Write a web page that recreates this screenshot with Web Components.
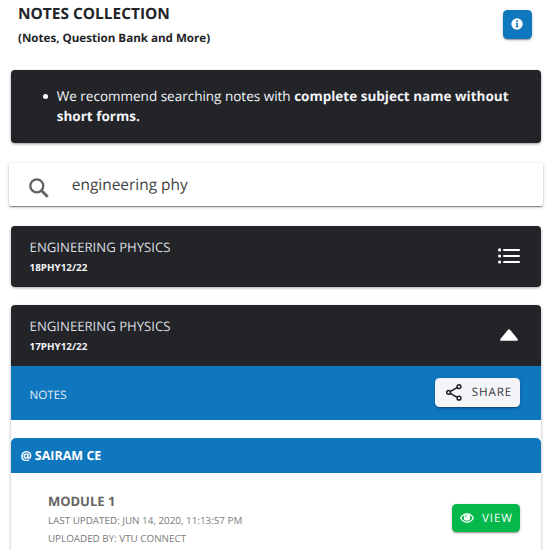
<!DOCTYPE html>
<html lang="en">
<head>
<meta charset="utf-8">
<title>Notes Collection</title>
<style>
html, body { margin: 0; height: 550px; overflow: hidden; background: #fff; }
</style>
</head>
<body>
<notes-page></notes-page>
<script>
const icons = {
  info: '<svg viewBox="0 0 12 12" width="12" height="12"><circle cx="6" cy="6" r="5.7" fill="#fff"/><g fill="#0f77be"><circle cx="6" cy="3.3" r="1"/><path d="M4.6 4.9h2.2v3.3h.8v1H4.5v-1h.8V5.8h-.7z"/></g></svg>',
  search: '<svg viewBox="0 0 20 20" width="20" height="20" fill="none" stroke="#626262"><circle cx="7.8" cy="7.8" r="6.5" stroke-width="2.3"/><path d="M12.4 12.4l6.3 6.3" stroke-width="2.8"/></svg>',
  list: '<svg viewBox="0 0 22 16" width="22" height="16" fill="#fff"><circle cx="1.6" cy="1.9" r="1.6"/><circle cx="1.6" cy="8" r="1.6"/><circle cx="1.6" cy="14" r="1.6"/><rect x="5" y=".9" width="17" height="2" rx="1"/><rect x="5" y="7" width="17" height="2" rx="1"/><rect x="5" y="13" width="17" height="2" rx="1"/></svg>',
  up: '<svg viewBox="0 0 18 12" width="18" height="12" fill="#fff"><path d="M1.2 11.8h15.6c1 0 1.4-1.1.8-1.9L10.2.9Q9 -.4 7.8.9L.4 9.9c-.6.8-.2 1.9.8 1.9z"/></svg>',
  share: '<svg viewBox="0 0 16 17" width="16" height="17" fill="none" stroke="#1d1e20" stroke-width="1.5"><path d="M4.4 7.4l6.7-3.8M4.4 9.4l6.7 4"/><circle cx="2.6" cy="8.4" r="1.9"/><circle cx="13" cy="2.7" r="1.9"/><circle cx="13" cy="14.2" r="1.9"/></svg>',
  eye: '<svg viewBox="0 0 14 10" width="14" height="10"><path d="M.7 5C2.1 2.3 4.4.9 7 .9S11.900 2.300 13.300 5C11.900 7.700 9.600 9.100 7 9.100S2.100 7.700.7 5z" fill="none" stroke="#fff" stroke-width="1.300"/><circle cx="7" cy="4.400" r="3.200" fill="#fff"/><path d="M5.300 4.500A1.900 1.900 0 0 1 7.100 2.600" fill="none" stroke="#04b84c" stroke-width=".8"/></svg>'
};

function define(name, html) {
  const template = document.createElement('template');
  template.innerHTML = html;
  customElements.define(name, class extends HTMLElement {
    constructor() {
      super();
      this.attachShadow({ mode: 'open' }).append(template.content.cloneNode(true));
    }
  });
}

customElements.define('app-icon', class extends HTMLElement {
  connectedCallback() {
    const root = this.shadowRoot || this.attachShadow({ mode: 'open' });
    root.innerHTML = '<style>:host{display:block;flex:none}svg{display:block}</style>' + icons[this.getAttribute('name')];
  }
});

define('app-button', `
<style>
:host { display: flex; align-items: center; box-sizing: border-box; height: 28.5px; flex: none; border-radius: 4.500px;
  background: var(--bg); color: var(--fg, #fff); font-size: 11.600px; letter-spacing: .9px; white-space: nowrap;
  box-shadow: 0 2px 1px -1px #0003, 0 1px 2px #00000030, 0 1px 4px #0000001c; }
</style><slot></slot>`);

define('page-header', `
<style>
:host { display: flex; justify-content: space-between; height: 70.4px; box-sizing: border-box; padding: 0 18.300px 0 18px; color: #222428; }
h1 { margin: 1.800px 0 0; font-size: 15.450px; line-height: 22px; font-weight: 700; }
p { margin: 6px 0 0; font-size: 11.600px; line-height: 17px; font-weight: 700; }
app-button { margin-top: 10px; width: 28.700px; justify-content: center; --bg: #0f77be; }
app-icon { margin-top: -1px; }
</style>
<div><h1><slot name="title"></slot></h1><p><slot name="subtitle"></slot></p></div>
<app-button><app-icon name="info"></app-icon></app-button>`);

define('tip-card', `
<style>
:host { display: block; box-sizing: border-box; height: 72.400px; margin: 0 9.300px 0 11.400px; padding: 15.300px 20px 0 32.100px;
  border-radius: 4px; background: #222428; color: #f4f5f8; font-size: 13.500px; line-height: 20.300px; box-shadow: 0 1px 3px #0006; }
ul { margin: 0; padding: 0; list-style: none; }
li { display: flex; gap: 8.300px; white-space: nowrap; }
li::before { content: ""; width: 5px; height: 5px; margin-top: 8.300px; border-radius: 50%; background: #fff; }
</style><ul><li><div><slot></slot></div></li></ul>`);

define('search-bar', `
<style>
:host { display: flex; box-sizing: border-box; height: 43px; margin: 20.400px 7px 20.300px 9.300px; padding-left: 20px; border-radius: 2px;
  background: #fff; color: #424242; font-size: 15.450px; line-height: 22px; box-shadow: 0 2px 1px -1px #0004, 0 1px 2px #0004, 0 1px 5px #0002; }
app-icon { margin-top: 15px; }
span { margin: 10px 0 0 22.500px; }
</style><app-icon name="search"></app-icon><span><slot></slot></span>`);

define('subject-card', `
<style>
:host { display: block; margin: 0 9.300px 18.200px 11.400px; border-radius: 4px; background: #fff; box-shadow: 0 1px 3px #0005; }
:host([open]) { margin-bottom: 0; border-radius: 4px 4px 0 0; }
header { display: flex; align-items: center; justify-content: space-between; height: 60.500px; box-sizing: border-box; padding: 0 21px 0 18.200px; background: #222428; color: #f4f5f8; border-radius: 4px; }
:host([open]) header { border-radius: 4px 4px 0 0; padding-right: 23px; }
h2 { margin: 0; font-size: 13.150px; line-height: 19px; font-weight: 400; color: #dcdde0; }
p { margin: 1.500px 0 0; font-size: 9.850px; line-height: 16px; font-weight: 700; }
</style>
<header><div><h2><slot name="name"></slot></h2><p><slot name="code"></slot></p></div><slot name="icon"></slot></header>
<slot></slot>`);

define('notes-row', `
<style>
:host { display: flex; justify-content: space-between; align-items: center; height: 54.300px; box-sizing: border-box; padding: 0 20.500px 0 18.200px; background: #0f77be; color: #e8f2fa; font-size: 11.600px; }
.label { margin-top: 5.500px; }
app-button { margin-top: -1px; width: 85px; padding-left: 10.500px; gap: 10px; --bg: #f4f5f8; --fg: #333539; }
</style>
<span class="label"><slot></slot></span><app-button><app-icon name="share"></app-icon><span>SHARE</span></app-button>`);

define('uploader-section', `
<style>
:host { display: block; margin-top: 18px; height: 112px; }
h3 { margin: 0; box-sizing: border-box; height: 35px; padding-left: 9px; border-radius: 5px 5px 0 0; background: #0f77be; color: #fff; font-size: 12.500px; line-height: 35px; font-weight: 700; }
</style><h3><slot name="name"></slot></h3><slot></slot>`);

define('module-item', `
<style>
:host { display: flex; justify-content: space-between; padding: 18.500px 20.500px 0 36.500px; color: #7a7a7a; }
h4 { margin: 0; font-size: 13px; line-height: 20px; font-weight: 700; color: #666; }
p { margin: 0; font-size: 9.850px; line-height: 18px; }
app-button { margin-top: 12.500px; width: 68.500px; padding-left: 8.300px; gap: 8px; --bg: #04b84c; }
app-icon { margin-top: -1px; }
</style>
<div><h4><slot name="title"></slot></h4><p><slot name="updated"></slot></p><p><slot name="author"></slot></p></div>
<app-button><app-icon name="eye"></app-icon><span>VIEW</span></app-button>`);

define('notes-page', `
<style>
:host { display: flow-root; height: 550px; overflow: hidden; font-family: "Open Sans", "Noto Sans", sans-serif; text-rendering: geometricPrecision; }
app-icon[name="list"] { margin-top: -2px; }
</style>
<page-header><span slot="title">NOTES COLLECTION</span><span slot="subtitle">(Notes, Question Bank and More)</span></page-header>
<tip-card>We recommend searching notes with <b>complete subject name without</b><br><b>short forms.</b></tip-card>
<search-bar>engineering phy</search-bar>
<subject-card><span slot="name">ENGINEERING PHYSICS</span><span slot="code">18PHY12/22</span><app-icon slot="icon" name="list"></app-icon></subject-card>
<subject-card open><span slot="name">ENGINEERING PHYSICS</span><span slot="code">17PHY12/22</span><app-icon slot="icon" name="up"></app-icon>
<notes-row>NOTES</notes-row>
<uploader-section><span slot="name">@ SAIRAM CE</span>
<module-item><span slot="title">MODULE 1</span><span slot="updated">LAST UPDATED: JUN 14, 2020, 11:13:57 PM</span><span slot="author">UPLOADED BY: VTU CONNECT</span></module-item>
</uploader-section></subject-card>`);
</script>
</body>
</html>
